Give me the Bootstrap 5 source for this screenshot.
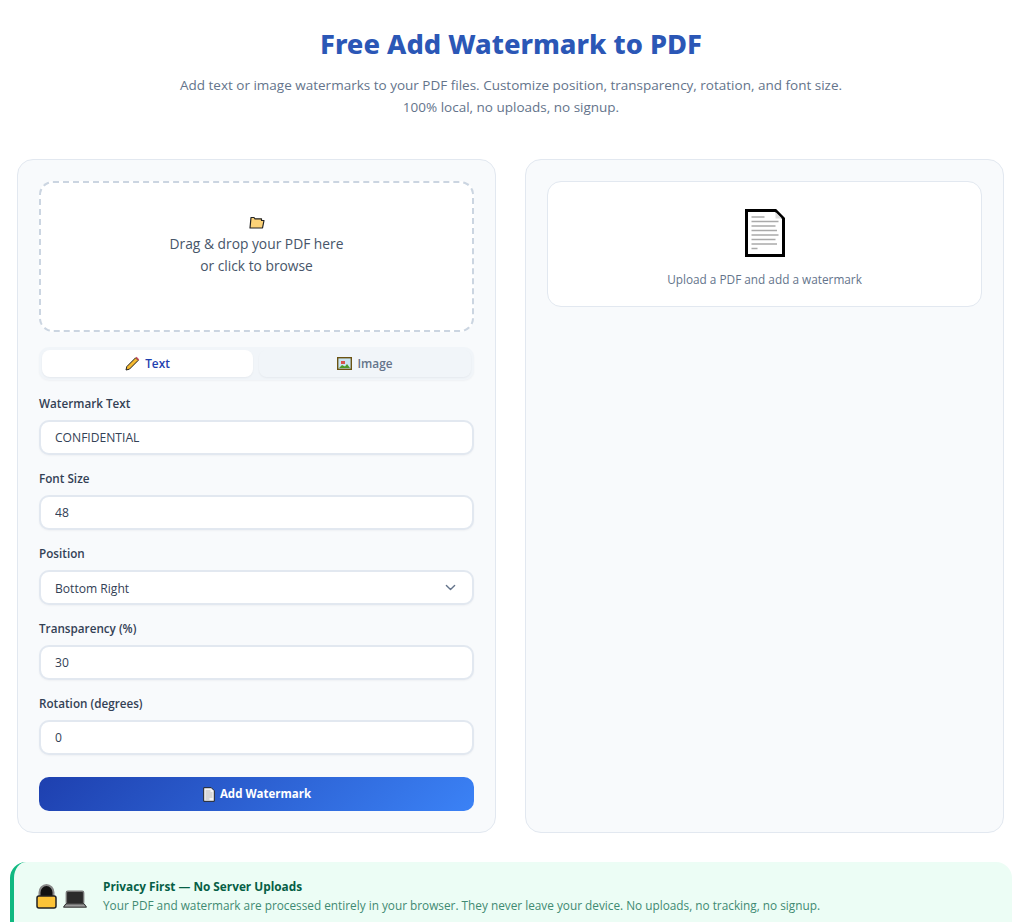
<!DOCTYPE html>
<html lang="en"><head><meta charset="utf-8"><title>Free Add Watermark to PDF</title>
<link href="https://cdn.jsdelivr.net/npm/bootstrap@5.3.0/dist/css/bootstrap.min.css" rel="stylesheet">
<style>
html,body{height:922px;overflow:hidden}
body{font-family:"Open Sans","Noto Sans",sans-serif;background:#fff;color:#334155}
.page-wrap{padding:0 12px 0 10px}
.wm-title{font-family:"Noto Sans",sans-serif;font-size:27.3px;font-weight:800;color:#2b57b6;line-height:36px;margin:26px 0 0}
.wm-sub{font-size:13.5px;line-height:22px;color:#64748b;margin:12px 0 41px}
.wm-cols{padding:0 8px 0 7px;gap:29px;margin-bottom:29px}
.wm-panel{flex:1 1 0;height:674px;background:#f8fafc;border:1px solid #e2e8f0;border-radius:16px;padding:21px}
.wm-drop{height:151px;background:#fff;border:2px dashed #cbd5e1;border-radius:14px;font-size:13.8px;line-height:22px;color:#475569;margin-bottom:15px;padding-bottom:20px}
.wm-drop svg{margin-bottom:4px}
.wm-tabs{height:33px;background:#f1f5f9;border-radius:10px;padding:3px;margin-bottom:15px;gap:6px;box-shadow:0 1px 2px rgba(15,23,42,.04)}
.wm-tab{flex:1 1 0;border-radius:8px;font-size:11.8px;font-weight:600;color:#64748b;gap:5px;box-shadow:0 1px 2px rgba(15,23,42,.05)}
.wm-tab.on{background:#fff;color:#1e40af;flex:0 0 211px}
.wm-label{font-size:11.7px;font-weight:600;color:#334155;line-height:17px;margin-bottom:8px;display:block}
.wm-field{margin-bottom:15px}
.wm-input.form-control,.wm-input.form-select{height:35px;border:2px solid #e2e8f0;border-radius:10px;font-size:12.1px;color:#334155;padding:0 14px;background-color:#fff;box-shadow:0 1px 2px rgba(15,23,42,.04)}
.wm-input.form-select{padding-top:4px;background-image:url("data:image/svg+xml,%3csvg xmlns='http://www.w3.org/2000/svg' viewBox='0 0 16 16'%3e%3cpath fill='none' stroke='%2364748b' stroke-linecap='round' stroke-linejoin='round' stroke-width='2' d='m2 5 6 6 6-6'/%3e%3c/svg%3e");background-size:11px 11px;background-position:right 16px center}
.wm-btn.btn{height:34px;width:100%;margin-top:22px;border:0;border-radius:10px;background:linear-gradient(135deg,#1e40af,#3b82f6);color:#fff;font-size:11.5px;font-weight:700;gap:5px;padding:0 0 0 1px}
.wm-preview{height:126px;background:#fff;border:1px solid #e2e8f0;border-radius:14px;color:#64748b;font-size:11.8px;padding-top:27px;line-height:17px}
.wm-preview svg{margin-bottom:14px}
.wm-banner{height:90px;background:#ecfdf5;border-left:4px solid #10b981;border-radius:16px;padding:15px 22px;gap:11px;align-items:flex-start}
.wm-banner b{display:block;font-size:11.8px;font-weight:700;color:#065f46;line-height:19px}
.wm-banner span.msg{display:block;font-size:11.8px;color:#3f8a72;line-height:19px}
.wm-emoji{gap:6px;width:56px;padding-top:7px}
</style></head><body>
<div class="page-wrap">
<div class="text-center">
<h1 class="wm-title">Free Add Watermark to PDF</h1>
<p class="wm-sub">Add text or image watermarks to your PDF files. Customize position, transparency, rotation, and font size.<br>100% local, no uploads, no signup.</p>
</div>
<div class="d-flex wm-cols">
<div class="wm-panel">
<div class="wm-drop d-flex flex-column align-items-center justify-content-center text-center">
<svg width="16" height="13" viewBox="0 0 16 13"><path d="M2 1.500h3l1 1.300h6.500v1.700H15l-1.500 7.500H1z" fill="#fcd277" stroke="#222" stroke-width="1.200" stroke-linejoin="round"/></svg>
<div>Drag &amp; drop your PDF here</div><div>or click to browse</div>
</div>
<div class="wm-tabs d-flex">
<div class="wm-tab on d-flex align-items-center justify-content-center"><svg width="15" height="15" viewBox="0 0 15 15"><path d="M1 14l.8-3.400L10.600 1.800l2.600 2.600-8.800 8.800z" fill="#f5b92f" stroke="#222" stroke-width="1"/><path d="M10.600 1.800l1-1 2.600 2.600-1 1z" fill="#c9485b"/></svg>Text</div>
<div class="wm-tab d-flex align-items-center justify-content-center"><svg width="15" height="13" viewBox="0 0 15 13"><rect x=".7" y=".7" width="13.600" height="11.600" fill="#c8e4f4" stroke="#6b5312" stroke-width="1.400"/><path d="M2 11l3-3 3 1.500 2-2.500 3 4z" fill="#4c9a2a"/><rect x="4" y="4" width="4" height="3" fill="#d9534f"/></svg>Image</div>
</div>
<div class="wm-field"><label class="wm-label" for="t1">Watermark Text</label><input id="t1" class="form-control wm-input" value="CONFIDENTIAL"></div>
<div class="wm-field"><label class="wm-label" for="t2">Font Size</label><input id="t2" class="form-control wm-input" value="48"></div>
<div class="wm-field"><label class="wm-label" for="t3">Position</label><select id="t3" class="form-select wm-input"><option>Bottom Right</option></select></div>
<div class="wm-field"><label class="wm-label" for="t4">Transparency (%)</label><input id="t4" class="form-control wm-input" value="30"></div>
<div class="wm-field"><label class="wm-label" for="t5">Rotation (degrees)</label><input id="t5" class="form-control wm-input" value="0"></div>
<button class="btn wm-btn d-flex align-items-center justify-content-center"><svg width="12" height="15" viewBox="0 0 12 15"><path d="M.7.7h7.600l3 3v10.600H.7z" fill="#f4f4f4" stroke="#222" stroke-width="1"/><path d="M2.500 4h5M2.500 6h7M2.500 8h7M2.500 10h7M2.500 12h4" stroke="#aaa" stroke-width=".8"/></svg>Add Watermark</button>
</div>
<div class="wm-panel">
<div class="wm-preview d-flex flex-column align-items-center">
<svg width="40" height="48" viewBox="0 0 40 48"><path d="M1.500 1.500h29l8 8v37h-37z" fill="#fff" stroke="#000" stroke-width="3"/><path d="M30.500 3v6.500h6.500z" fill="#ddd"/><path d="M6.500 8h13M6.500 12.500h27M6.500 17h24M6.500 21.500h25.500M6.500 26h27M6.500 30.500h24M6.500 35h25.500M6.500 39.500h6" stroke="#aaa" stroke-width="1.300"/></svg>
<div>Upload a PDF and add a watermark</div>
</div>
</div>
</div>
<div class="wm-banner d-flex">
<div class="wm-emoji d-flex align-items-end"><svg width="21" height="25" viewBox="0 0 21 25"><path d="M3.500 12V8.500a7 7.500 0 0 1 14 0V12" fill="#111" stroke="#888" stroke-width="2"/><rect x="1" y="12" width="19" height="12" rx="2" fill="#fcc438" stroke="#222" stroke-width="1.500"/></svg><svg width="24" height="19" viewBox="0 0 25 19"><rect x="3.500" y="1" width="18" height="13" rx="1.500" fill="#2b2b2b" stroke="#777" stroke-width="1.500"/><path d="M3 14h19l2.500 3.500H.5z" fill="#999" stroke="#222" stroke-width="1"/></svg></div>
<div><b>Privacy First — No Server Uploads</b><span class="msg">Your PDF and watermark are processed entirely in your browser. They never leave your device. No uploads, no tracking, no signup.</span></div>
</div>
</div>
<script src="https://cdn.jsdelivr.net/npm/bootstrap@5.3.0/dist/js/bootstrap.bundle.min.js"></script>
</body></html>
